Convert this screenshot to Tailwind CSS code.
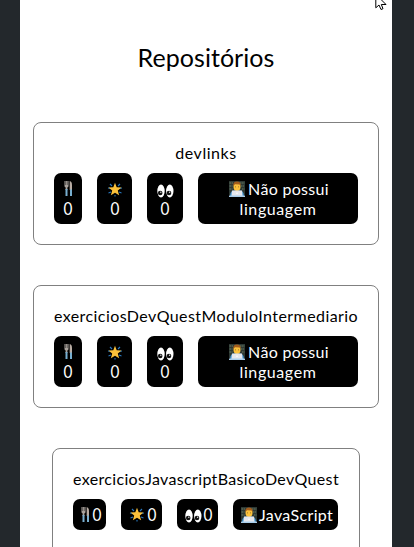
<!DOCTYPE html>
<html lang="pt-BR">
<head>
<meta charset="utf-8">
<title>Repositórios</title>
<script src="https://cdn.jsdelivr.net/npm/@tailwindcss/browser@4"></script>
</head>
<body class="h-[547px] overflow-hidden bg-[#23282c] font-['Lato',sans-serif] text-[16px] leading-[20px] text-black">
<svg class="hidden">
  <symbol id="fork" viewBox="0 0 9 17">
    <path d="M.5 1v5q0 1 1.2 1.500L1.500 10h2L3.300 7.500Q4.500 7 4.500 6V1z" fill="#aaa39d"/>
    <path d="M1.600 1v4M3.300 1v4" stroke="#151515" stroke-width=".5"/>
    <path d="M1.500 9h2v7h-2z" fill="#78afd0"/>
    <path d="M5.700 1Q8 1.500 8 5v5H5.700z" fill="#b8aca3"/>
    <path d="M6 9.500h2V16H6z" fill="#78afd0"/>
  </symbol>
  <symbol id="star" viewBox="0 0 16 15">
    <path d="M3 2l2 2M13 2l-2 2M1 6l3 .5M15 6l-3 .5M1.500 11l2.500-1M14.500 11L12 10M8 13v1.500" stroke="#2977bd" stroke-width="1.100"/>
    <path d="M8 .8l1.700 4.500 4.800.2-3.700 3 1.300 4.800L8 10.700l-4.100 2.600 1.300-4.800-3.700-3 4.800-.2z" fill="#fbc13b"/>
  </symbol>
  <symbol id="eyes" viewBox="0 0 17 14">
    <ellipse cx="4" cy="7" rx="3.700" ry="6.500" fill="#fff"/>
    <ellipse cx="12.800" cy="7" rx="3.700" ry="6.500" fill="#fff"/>
    <circle cx="3.200" cy="9" r="2.300" fill="#111"/><circle cx="12" cy="9" r="2.300" fill="#111"/>
    <circle cx="3.800" cy="8.300" r=".7" fill="#ddd"/><circle cx="12.600" cy="8.300" r=".7" fill="#ddd"/>
  </symbol>
  <symbol id="coder" viewBox="0 0 16 16">
    <path d="M0 0h16v14H0z" fill="#2d3834"/>
    <path d="M.5 2h4M11 2h4.500M.5 5h3M12 5h3M.5 8h3M13 8h2.500" stroke="#748567" stroke-width=".9" stroke-dasharray="1.500 .6"/>
    <path d="M1 15q0-5 4-5.500h6q4 .5 4 5.500z" fill="#3e91cd"/>
    <ellipse cx="8" cy="5.800" rx="3.500" ry="4.200" fill="#fbc13b"/>
    <path d="M4.300 5Q4 .6 8 .6T11.700 5L10.500 3.500 6 3.200z" fill="#a35d1c"/>
    <path d="M6.500 5.500v.8M9.500 5.500v.8" stroke="#59411f" stroke-width=".7"/>
    <path d="M3 9.500h10l.7 6H2.300z" fill="#e5e7ed"/>
    <path d="M0 14.500h16V16H0z" fill="#a9cdea"/>
    <circle cx="8" cy="12.300" r=".8" fill="#fff"/>
  </symbol>
</svg>
<main class="relative ml-[20px] flex h-[547px] w-[372px] flex-col items-center overflow-hidden bg-white">
  <h1 class="mt-[41px] h-[33px] shrink-0 text-[25px] leading-[32px] tracking-[0.05px]">Repositórios</h1>

  <section class="mt-[48px] flex h-[123px] w-[346px] shrink-0 flex-col items-center rounded-[8px] border border-[#808080] pt-[20px]">
    <h2 class="h-[30px] whitespace-nowrap tracking-[0.55px]">devlinks</h2>
    <div class="flex gap-[15px] text-white">
      <div class="flex h-[51px] w-[28px] flex-col items-center rounded-[7px] bg-black pt-[7px]"><svg class="h-[17px] w-[9px]"><use href="#fork"/></svg><span class="mt-[2px] scale-x-90 text-[17px]">0</span></div>
      <div class="flex h-[51px] w-[35px] flex-col items-center rounded-[7px] bg-black pt-[9px]"><svg class="h-[15px] w-[16px]"><use href="#star"/></svg><span class="mt-[2px] scale-x-90 text-[17px]">0</span></div>
      <div class="flex h-[51px] w-[36px] flex-col items-center rounded-[7px] bg-black pt-[11px]"><svg class="h-[14px] w-[17px]"><use href="#eyes"/></svg><span class="mt-[1px] scale-x-90 text-[17px]">0</span></div>
      <div class="flex h-[51px] w-[160px] flex-col items-center rounded-[7px] bg-black pt-[6px]"><div class="ml-[2px] flex h-[20px] gap-[3px]"><svg class="mt-[2px] size-[16px]"><use href="#coder"/></svg><span class="tracking-[0.3px]">Não possui</span></div><span class="tracking-[0.6px]">linguagem</span></div>
    </div>
  </section>

  <section class="mt-[40px] flex h-[123px] w-[346px] shrink-0 flex-col items-center rounded-[8px] border border-[#808080] pt-[20px]">
    <h2 class="h-[30px] whitespace-nowrap tracking-[0.43px]">exerciciosDevQuestModuloIntermediario</h2>
    <div class="flex gap-[15px] text-white">
      <div class="flex h-[51px] w-[28px] flex-col items-center rounded-[7px] bg-black pt-[7px]"><svg class="h-[17px] w-[9px]"><use href="#fork"/></svg><span class="mt-[2px] scale-x-90 text-[17px]">0</span></div>
      <div class="flex h-[51px] w-[35px] flex-col items-center rounded-[7px] bg-black pt-[9px]"><svg class="h-[15px] w-[16px]"><use href="#star"/></svg><span class="mt-[2px] scale-x-90 text-[17px]">0</span></div>
      <div class="flex h-[51px] w-[36px] flex-col items-center rounded-[7px] bg-black pt-[11px]"><svg class="h-[14px] w-[17px]"><use href="#eyes"/></svg><span class="mt-[1px] scale-x-90 text-[17px]">0</span></div>
      <div class="flex h-[51px] w-[160px] flex-col items-center rounded-[7px] bg-black pt-[6px]"><div class="ml-[2px] flex h-[20px] gap-[3px]"><svg class="mt-[2px] size-[16px]"><use href="#coder"/></svg><span class="tracking-[0.3px]">Não possui</span></div><span class="tracking-[0.6px]">linguagem</span></div>
    </div>
  </section>

  <section class="mt-[40px] flex h-[123px] w-[308px] shrink-0 flex-col items-center rounded-[8px] border border-[#808080] pt-[20px]">
    <h2 class="h-[30px] whitespace-nowrap tracking-[0.34px]">exerciciosJavascriptBasicoDevQuest</h2>
    <div class="mr-[1px] flex gap-[15px] text-white">
      <div class="flex h-[31px] w-[33px] items-center rounded-[7px] bg-black pl-[8px]"><svg class="h-[17px] w-[9px]"><use href="#fork"/></svg><span class="ml-[2px] scale-x-90 text-[17px]">0</span></div>
      <div class="flex h-[31px] w-[41px] items-center rounded-[7px] bg-black pl-[8px]"><svg class="h-[15px] w-[16px]"><use href="#star"/></svg><span class="ml-[2px] scale-x-90 text-[17px]">0</span></div>
      <div class="flex h-[31px] w-[41px] items-center rounded-[7px] bg-black pl-[8px]"><svg class="mt-[3px] h-[14px] w-[17px]"><use href="#eyes"/></svg><span class="ml-[1px] scale-x-90 text-[17px]">0</span></div>
      <div class="flex h-[31px] w-[105px] items-center rounded-[7px] bg-black pl-[8px]"><svg class="size-[16px]"><use href="#coder"/></svg><span class="ml-[2px] tracking-[0.35px]">JavaScript</span></div>
    </div>
  </section>

  <svg class="absolute left-[355px] top-0 h-[11px] w-[13px]" viewBox="0 0 13 11" fill="#fff" stroke="#000"><path d="M.8-5V7.800L4 5l2 4.500 2-.8L6.300 4.500H11L5.500-1"/></svg>
</main>
</body>
</html>
